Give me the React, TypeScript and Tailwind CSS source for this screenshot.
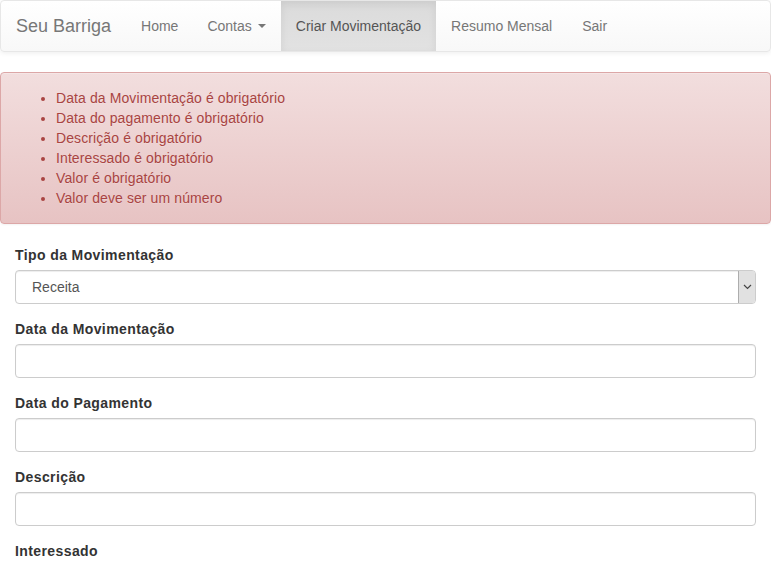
import React from "react";

const erros = [
  "Data da Movimentação é obrigatório",
  "Data do pagamento é obrigatório",
  "Descrição é obrigatório",
  "Interessado é obrigatório",
  "Valor é obrigatório",
  "Valor deve ser um número",
];

const campos = ["Data da Movimentação", "Data do Pagamento", "Descrição", "Interessado"];

const inputClass =
  "block w-full h-[34px] px-3 py-1.5 text-[14px] text-[#555] bg-white border border-[#ccc] rounded-[4px] shadow-[inset_0_1px_1px_rgba(0,0,0,0.075)] outline-none";

const Navbar = () => (
  <nav className="flex h-[52px] border border-[#e7e7e7] rounded-[4px] bg-linear-to-b from-white to-[#f8f8f8] shadow-[inset_0_1px_0_rgba(255,255,255,0.15),0_1px_5px_rgba(0,0,0,0.075)] mb-5">
    <a className="px-[15px] py-[15px] text-[18px] leading-5 text-[#777] [text-shadow:0_1px_0_rgba(255,255,255,0.25)]">
      Seu Barriga
    </a>
    <ul className="flex">
      <li className="px-[15px] py-[15px] text-[#777] leading-5">Home</li>
      <li className="pl-[14px] pr-[15px] py-[15px] text-[#777] leading-5 flex items-center">
        Contas
        <span className="ml-[6px] w-0 h-0 border-x-4 border-x-transparent border-t-4 border-t-[#777]" />
      </li>
      <li className="px-[15px] py-[15px] text-[#555] leading-5 bg-linear-to-b from-[#dbdbdb] to-[#e2e2e2] shadow-[inset_0_3px_9px_rgba(0,0,0,0.075)]">
        Criar Movimentação
      </li>
      <li className="px-[15px] py-[15px] text-[#777] leading-5">Resumo Mensal</li>
      <li className="px-[15px] py-[15px] text-[#777] leading-5">Sair</li>
    </ul>
  </nav>
);

export default function App() {
  return (
    <div className="w-[771px] h-[561px] overflow-hidden bg-white text-[14px] leading-5 text-[#333] font-['Liberation_Sans',Arial,sans-serif]">
      <Navbar />

      <div className="mb-5 p-[15px] border border-[#dca7a7] rounded-[4px] text-[#a94442] bg-linear-to-b from-[#f2dede] to-[#e7c3c3] shadow-[inset_0_1px_0_rgba(255,255,255,0.25),0_1px_2px_rgba(0,0,0,0.05)] [text-shadow:0_1px_0_rgba(255,255,255,0.2)]">
        <ul className="list-disc pl-10 tracking-[0.1px]">
          {erros.map((e) => (
            <li key={e}>{e}</li>
          ))}
        </ul>
      </div>

      <form className="px-[15px] pt-px">
        <div className="mb-[15px]">
          <label className="block mb-[5px] font-bold tracking-[0.4px]">Tipo da Movimentação</label>
          <div className="relative">
            <select className={inputClass + " appearance-none pl-4"} defaultValue="REC">
              <option value="REC">Receita</option>
              <option value="DESP">Despesa</option>
            </select>
            <span className="absolute right-[1px] top-[1px] bottom-[1px] w-[17px] flex items-center justify-center bg-[#e1e1e1] border-l border-[#adadad] rounded-r-[3px]">
              <svg width="9" height="6" viewBox="0 0 9 6">
                <path d="M1 1l3.5 3.5L8 1" fill="none" stroke="#444" strokeWidth="1.2" />
              </svg>
            </span>
          </div>
        </div>
        {campos.map((c) => (
          <div key={c} className="mb-[15px]">
            <label className="block mb-[5px] font-bold tracking-[0.4px]">{c}</label>
            <input type="text" className={inputClass} />
          </div>
        ))}
      </form>
    </div>
  );
}
